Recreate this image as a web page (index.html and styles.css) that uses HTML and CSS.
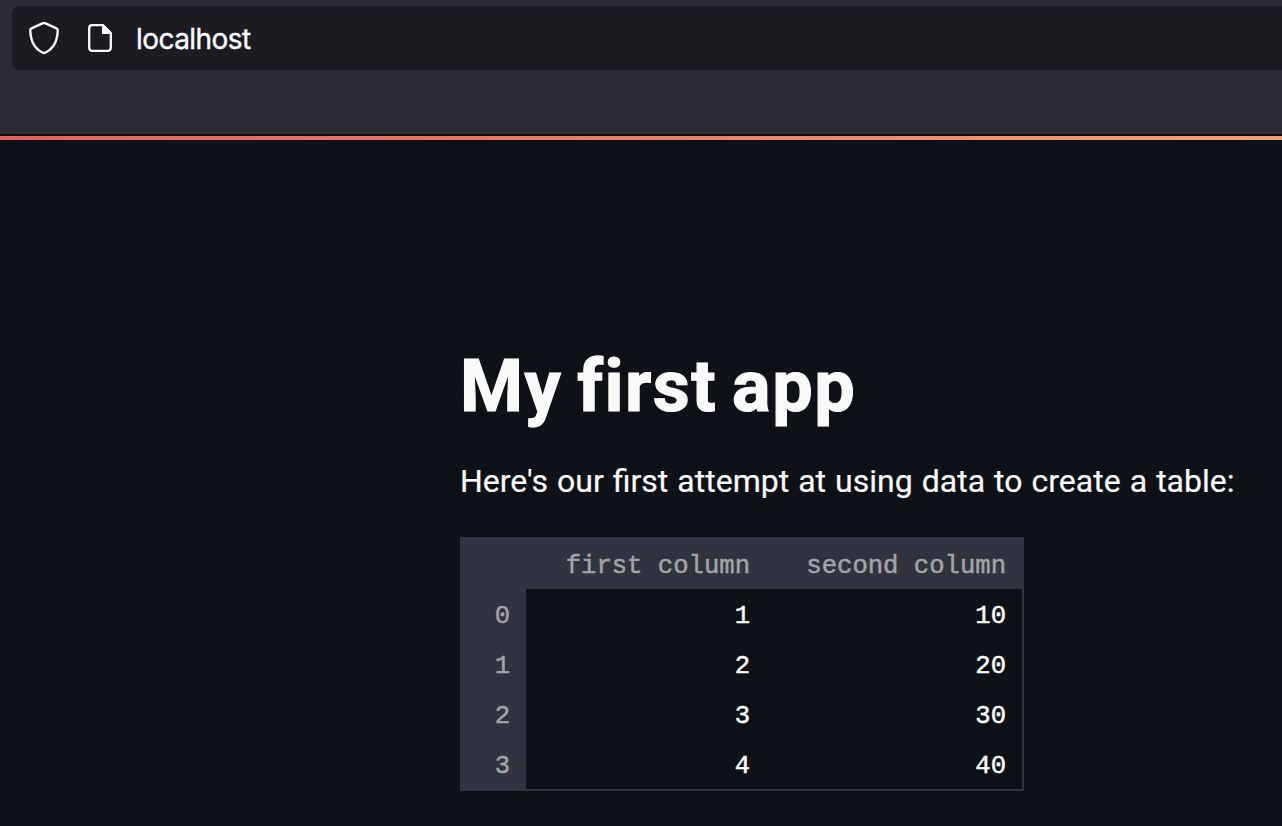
FILE: index.html
```html
<!DOCTYPE html>
<html lang="en">
<head>
<meta charset="utf-8">
<title>My first app</title>
<link rel="stylesheet" href="styles.css">
</head>
<body>
<header class="toolbar">
  <div class="address">
    <svg class="shield" width="32" height="34" viewBox="0 0 32 34" fill="none" stroke="#fbfbfe" stroke-width="2.4" stroke-linejoin="round"><path d="M15 2.2Q16 1.7 17 2.2L28.5 7.4Q29.8 8 29.7 9.5C29.4 20.5 25 28 17.2 31.7Q16 32.3 14.8 31.7C7 28 2.6 20.5 2.3 9.5Q2.2 8 3.5 7.4Z"/></svg>
    <svg class="page-icon" width="24" height="28" viewBox="0 0 24 28"><path d="M4.2 1.2H14.7L22.8 9.3V23.8Q22.8 26.8 19.8 26.8H4.2Q1.2 26.8 1.2 23.8V4.2Q1.2 1.2 4.2 1.2Z" fill="none" stroke="#fbfbfe" stroke-width="2.3"/><path d="M14 0H15.3L24 8.7V10H14Z" fill="#fbfbfe"/></svg>
    <span class="host">localhost</span>
  </div>
</header>
<div class="decoration"></div>
<main class="app">
  <h1 class="title">My first app</h1>
  <p class="intro">Here's our first attempt at using data to create a table:</p>
  <table class="data">
    <thead><tr><th class="index"></th><th class="first">first column</th><th class="second">second column</th></tr></thead>
    <tbody>
      <tr><th>0</th><td>1</td><td>10</td></tr>
      <tr><th>1</th><td>2</td><td>20</td></tr>
      <tr><th>2</th><td>3</td><td>30</td></tr>
      <tr><th>3</th><td>4</td><td>40</td></tr>
    </tbody>
  </table>
</main>
</body>
</html>
```
FILE: styles.css
```css
* { box-sizing: border-box; }
body {
  margin: 0;
  height: 826px;
  overflow: hidden;
  background: #0e1117;
  color: #fafafa;
  font-family: Roboto, "Liberation Sans", sans-serif;
}
.toolbar {
  height: 136px;
  padding: 6px 0 0 12px;
  background: #2b2a33;
  border-bottom: 2px solid #0c0c0d;
}
.address {
  display: flex;
  align-items: center;
  height: 64px;
  padding-left: 16px;
  background: #1c1b22;
  border-radius: 8px 0 0 8px;
}
.page-icon { margin-left: 28px; }
.host {
  margin-left: 24px;
  padding-top: 2px;
  color: #fbfbfe;
  font: 400 28px/40px Inter, sans-serif;
  letter-spacing: -0.55px;
  -webkit-text-stroke: 0.4px currentColor;
}
.decoration {
  height: 4px;
  background: linear-gradient(90deg, #e85d69, #f3a078);
}
.app { padding: 201px 0 0 460px; }
.title {
  margin: 0;
  font-size: 72px;
  line-height: 92px;
  font-weight: 700;
  letter-spacing: 1.5px;
  word-spacing: -4.5px;
  white-space: nowrap;
  -webkit-text-stroke: 1.2px currentColor;
}
.intro {
  margin: 22px 0 0;
  font-size: 32px;
  line-height: 52px;
  word-spacing: 1.1px;
  white-space: nowrap;
  -webkit-text-stroke: 0.2px currentColor;
}
.data {
  width: 564px;
  margin-top: 30px;
  table-layout: fixed;
  border-spacing: 0;
  border: 2px solid #31333f;
  font: 400 25.6px/44px "Liberation Mono", monospace;
  text-align: right;
  -webkit-text-stroke: 0.5px currentColor;
}
.data th, .data td { height: 50px; padding: 6px 16px 0 0; }
.data th {
  background: #31333f;
  color: #a3a3a7;
  font-weight: 400;
}
.index { width: 64px; }
.first { width: 240px; }
.second { width: 256px; }
```
